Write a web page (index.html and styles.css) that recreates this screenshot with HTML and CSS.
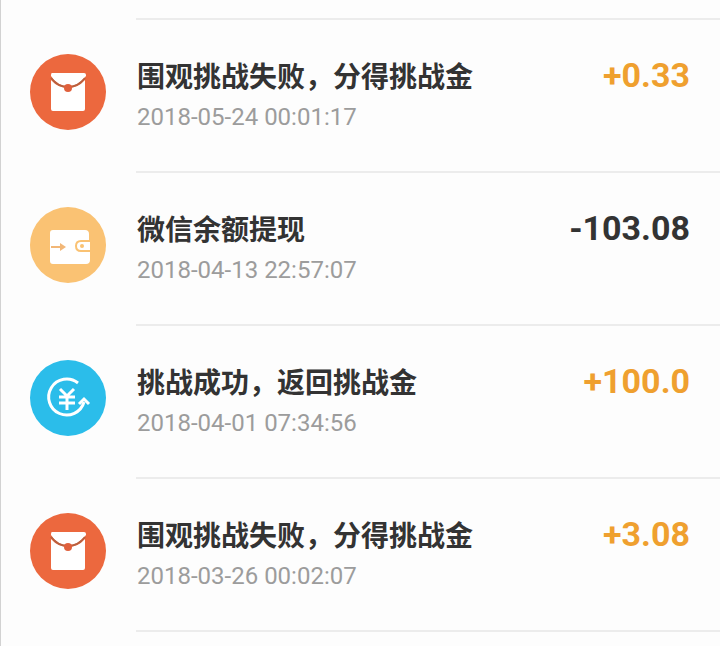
FILE: index.html
```
<!DOCTYPE html>
<html lang="zh-CN">
<head>
    <meta charset="UTF-8">
    <meta name="viewport" content="width=device-width, initial-scale=1.0">
    <title>账单明细</title>
    <link rel="stylesheet" href="styles.css">
</head>
<body>
    <svg class="symbols" aria-hidden="true">
        <symbol id="icon-packet" viewBox="0 0 76 76">
            <circle cx="38" cy="38" r="38" fill="#ec683e"/>
            <path d="M22 19h32q2 0 2 2v1q-7 10-18 10T21 22v-1q0-2 1-2z" fill="#fff"/>
            <path d="M21 26q7 8 17 8t17-8v29q0 2-2 2H23q-2 0-2-2z" fill="#fff"/>
            <path d="M21 24q7 9 17 9t17-9" fill="none" stroke="#b9603f" stroke-width="2"/>
            <circle cx="38" cy="34" r="4" fill="#e0603c"/>
        </symbol>
        <symbol id="icon-wallet" viewBox="0 0 76 76">
            <circle cx="38" cy="38" r="38" fill="#fac273"/>
            <path d="M23 23h32q4 0 4 4v6h-8q-6 0-6 6t6 6h9v8q0 4-4 4H23q-3 0-3-3V26q0-3 3-3z" fill="#fff"/>
            <path d="M51 35h9v8h-9q-4 0-4-4t4-4z" fill="#fff"/>
            <circle cx="52" cy="39" r="2" fill="#fac273"/>
            <path d="M21 40h11" fill="none" stroke="#f2b777" stroke-width="2"/>
            <path d="M30 36l6 4-6 4z" fill="#f2b777"/>
        </symbol>
        <symbol id="icon-refund" viewBox="0 0 76 76">
            <circle cx="38" cy="38" r="38" fill="#2bbdea"/>
            <g fill="none" stroke="#fff" stroke-width="3">
                <path d="M48 23A18 18 0 1 0 54 42"/>
                <path d="M49 44l5-5 5 5"/>
                <path d="M30 29l7 7 7-7M37 36v14M29 37h16M29 43h16"/>
            </g>
        </symbol>
    </svg>

    <ul class="bill-list">
        <li class="bill-item">
            <svg class="bill-icon" aria-hidden="true"><use href="#icon-packet"/></svg>
            <div class="bill-body">
                <div class="bill-info">
                    <p class="bill-title">围观挑战失败，分得挑战金</p>
                    <time class="bill-time">2018-05-24 00:01:17</time>
                </div>
                <span class="amount income">+0.33</span>
            </div>
        </li>
        <li class="bill-item">
            <svg class="bill-icon" aria-hidden="true"><use href="#icon-wallet"/></svg>
            <div class="bill-body">
                <div class="bill-info">
                    <p class="bill-title">微信余额提现</p>
                    <time class="bill-time">2018-04-13 22:57:07</time>
                </div>
                <span class="amount">-103.08</span>
            </div>
        </li>
        <li class="bill-item">
            <svg class="bill-icon" aria-hidden="true"><use href="#icon-refund"/></svg>
            <div class="bill-body">
                <div class="bill-info">
                    <p class="bill-title">挑战成功，返回挑战金</p>
                    <time class="bill-time">2018-04-01 07:34:56</time>
                </div>
                <span class="amount income">+100.0</span>
            </div>
        </li>
        <li class="bill-item">
            <svg class="bill-icon" aria-hidden="true"><use href="#icon-packet"/></svg>
            <div class="bill-body">
                <div class="bill-info">
                    <p class="bill-title">围观挑战失败，分得挑战金</p>
                    <time class="bill-time">2018-03-26 00:02:07</time>
                </div>
                <span class="amount income">+3.08</span>
            </div>
        </li>
    </ul>
</body>
</html>
```
FILE: styles.css
```
* {
    margin: 0;
    padding: 0;
    box-sizing: border-box;
}

body {
    min-height: 100vh;
    padding-top: 18px;
    border-left: 1px solid #d2d2d2;
    background-color: #fdfdfd;
    color: #333;
    font-family: Roboto, "Noto Sans CJK SC", sans-serif;
}

.symbols {
    display: none;
}

.bill-list {
    list-style: none;
}

.bill-item {
    display: flex;
    gap: 30px;
    padding-left: 29px;
}

.bill-icon {
    flex: none;
    width: 76px;
    height: 76px;
    margin-top: 36px;
}

.bill-body {
    flex: 1;
    display: flex;
    justify-content: space-between;
    align-items: flex-start;
    padding: 37px 30px 36px 1px;
    border-top: 2px solid #ececec;
}

.bill-item:last-child .bill-body {
    border-bottom: 2px solid #ececec;
}

.bill-title {
    font-size: 28px;
    font-weight: bold;
    line-height: 42px;
}

.bill-time {
    display: block;
    color: #9c9c9c;
    font-size: 24px;
    line-height: 36px;
}

.amount {
    font-size: 34px;
    font-weight: bold;
    line-height: 36px;
}

.income {
    color: #efa02f;
}
```
